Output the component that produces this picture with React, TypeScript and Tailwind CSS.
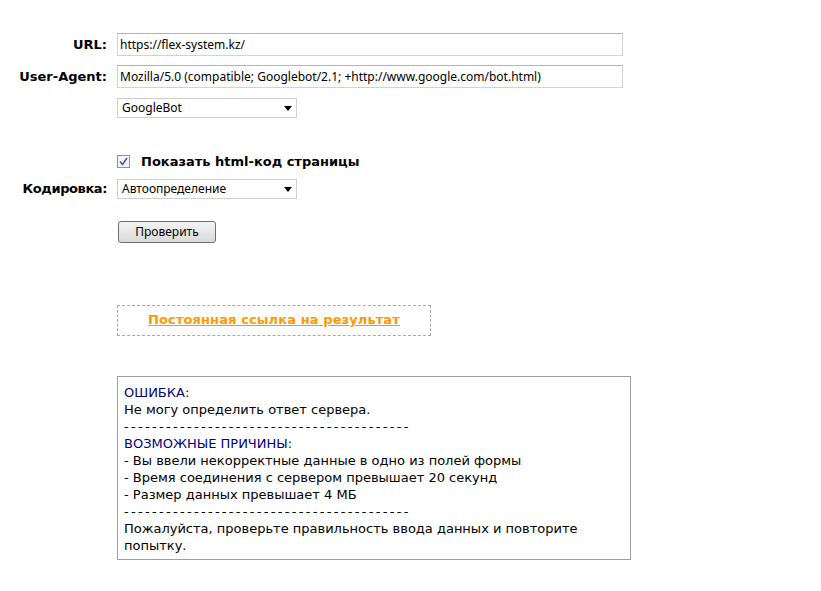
const verdana = { fontFamily: '"DejaVu Sans", Verdana, sans-serif' };

const Select = ({ value }: { value: string }) => (
  <div className="relative flex h-[20px] w-[180px] items-center border border-[#cfcfcf] bg-white pl-[4px] font-['Noto_Sans',sans-serif] text-[12px] text-black">
    <span>{value}</span>
    <span className="absolute right-[4px] top-[7px] h-0 w-0 border-x-[4px] border-t-[5px] border-x-transparent border-t-black" />
  </div>
);

const TextField = ({ value }: { value: string }) => (
  <div className="flex h-[23px] w-[506px] items-center border border-[#d2d2d2] border-t-[#b4b4b4] bg-white pl-[2px] font-['Noto_Sans',sans-serif] text-[12px] text-black">
    {value}
  </div>
);

const Label = ({ children }: { children: React.ReactNode }) => (
  <div className="flex items-center justify-end text-[13px] font-bold text-black" style={verdana}>
    {children}
  </div>
);

const Dashes = () => <div className="tracking-[2.3px]">-----------------------------------------</div>;

export default function App() {
  return (
    <div className="min-h-[591px] w-[821px] bg-white pt-[33px] text-black" style={verdana}>
      <div className="grid grid-cols-[107px_1fr] gap-x-[10px]">
        <Label>URL:</Label>
        <TextField value="https://flex-system.kz/" />

        <div className="mt-[9px] flex items-center justify-end">
          <Label>User-Agent:</Label>
        </div>
        <div className="mt-[9px]">
          <TextField value="Mozilla/5.0 (compatible; Googlebot/2.1; +http://www.google.com/bot.html)" />
        </div>

        <div />
        <div className="mt-[10px]">
          <Select value="GoogleBot" />
        </div>

        <div />
        <div className="mt-[34px] flex items-center gap-[11px]">
          <svg width="13" height="13" viewBox="0 0 13 13">
            <rect x="0.5" y="0.5" width="12" height="12" fill="#f4f4f8" stroke="#8e8fa2" />
            <path d="M3 6.5 L5.5 9.5 L10 3" fill="none" stroke="#4a5a9a" strokeWidth="1.6" />
          </svg>
          <span className="text-[13px] font-bold">Показать html-код страницы</span>
        </div>

        <div className="mt-[7px] flex items-center justify-end">
          <Label><span className="tracking-[-0.4px]">Кодировка:</span></Label>
        </div>
        <div className="mt-[7px]">
          <Select value="Автоопределение" />
        </div>

        <div />
        <div className="mt-[22px] pl-[1px]">
          <button className="flex h-[22px] w-[98px] items-center justify-center rounded-[3px] border border-[#707070] bg-gradient-to-b from-[#f4f4f4] to-[#dadada] font-['Noto_Sans',sans-serif] text-[12px] text-black">
            Проверить
          </button>
        </div>

        <div />
        <div className="mt-[62px]">
          <div className="flex h-[31px] w-[314px] items-center justify-center border border-dashed border-[#a8a8a8]">
            <a className="text-[13px] font-bold tracking-[0.1px] text-[#ff9900] underline">Постоянная ссылка на результат</a>
          </div>
        </div>

        <div />
        <div className="mt-[40px]">
          <div className="w-[514px] border border-[#a0a0a0] px-[6px] pb-[5px] pt-[7px] text-[13px] leading-[17px]">
            <div className="text-[#000080]">ОШИБКА:</div>
            <div>Не могу определить ответ сервера.</div>
            <Dashes />
            <div className="text-[#000080]">ВОЗМОЖНЫЕ ПРИЧИНЫ:</div>
            <div>- Вы ввели некорректные данные в одно из полей формы</div>
            <div>- Время соединения с сервером превышает 20 секунд</div>
            <div>- Размер данных превышает 4 МБ</div>
            <Dashes />
            <div>Пожалуйста, проверьте правильность ввода данных и повторите попытку.</div>
          </div>
        </div>
      </div>
    </div>
  );
}
